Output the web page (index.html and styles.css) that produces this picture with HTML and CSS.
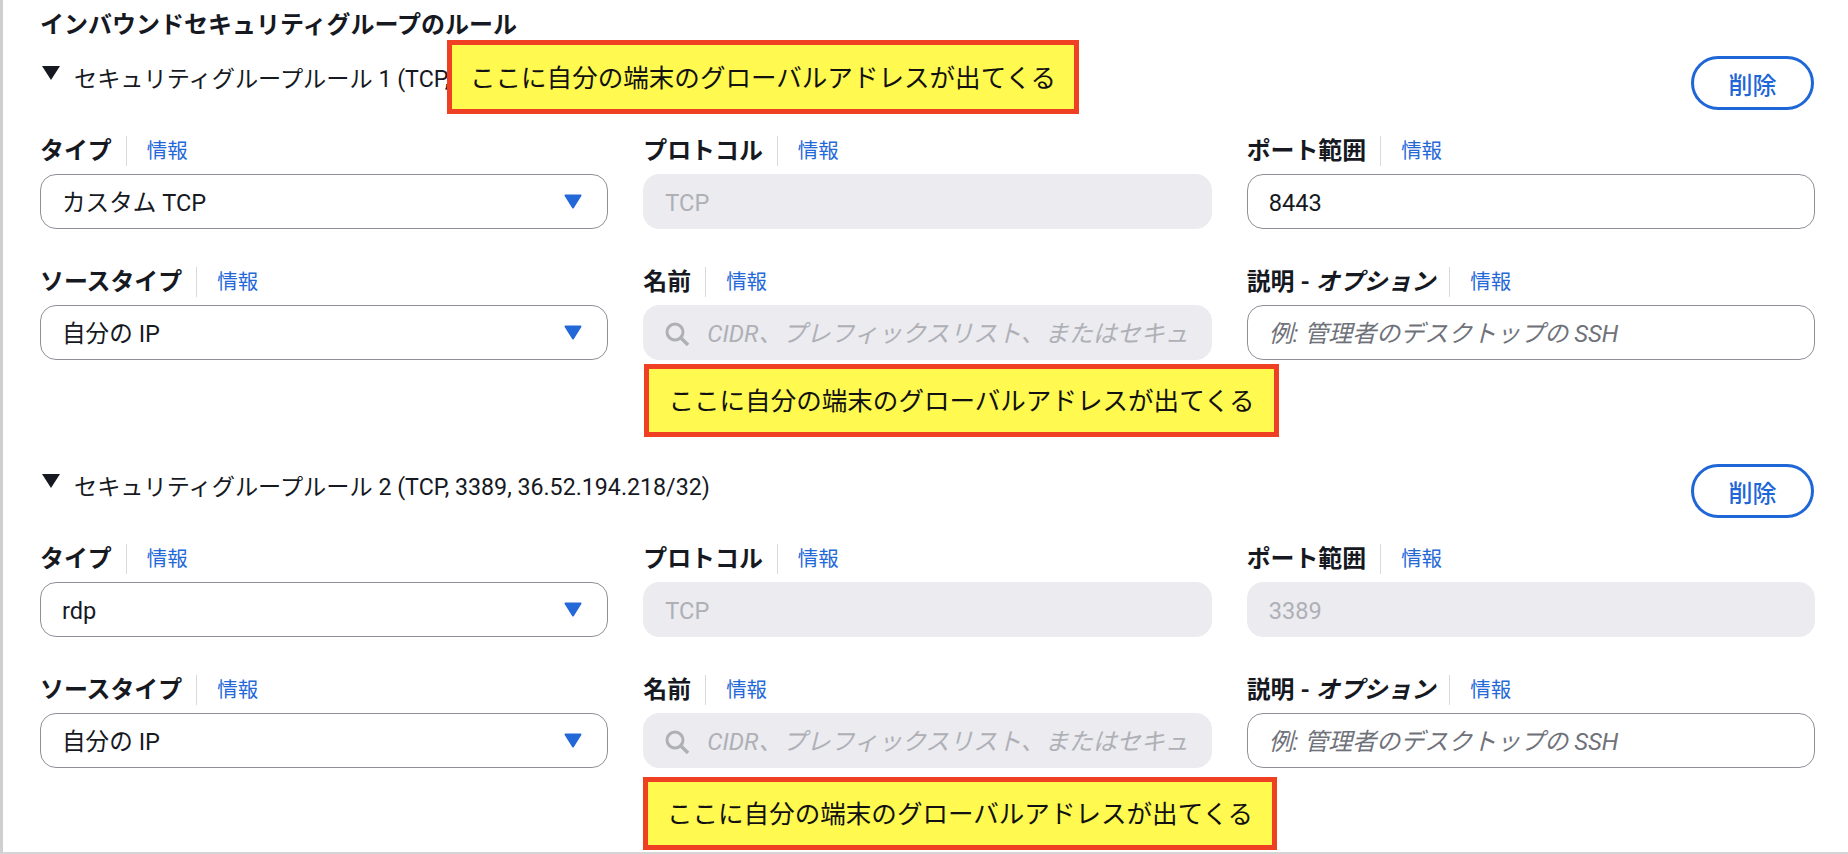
FILE: index.html
```html
<!DOCTYPE html>
<html lang="ja">
  <head>
    <title>インバウンドセキュリティグループのルール</title>
    <link rel="stylesheet" href="styles.css">
  </head>
  <body>
    <main class="panel">
      <h2 class="panel-title">インバウンドセキュリティグループのルール</h2>

      <section class="rule">
        <div class="rule-head">
          <div class="rule-title"><span class="caret"></span>セキュリティグループルール 1 (TCP,</div>
          <button class="btn-delete">削除</button>
        </div>
        <div class="fields">
          <div class="field">
            <div class="label"><span class="label-text">タイプ</span><a class="info">情報</a></div>
            <div class="control">カスタム TCP<svg class="arrow" viewBox="0 0 18 15"><path d="M1.5 1.5h15l-7.500 12z" fill="currentColor" stroke="currentColor" stroke-width="2" stroke-linejoin="round"/></svg></div>
          </div>
          <div class="field">
            <div class="label"><span class="label-text">プロトコル</span><a class="info">情報</a></div>
            <div class="control disabled">TCP</div>
          </div>
          <div class="field">
            <div class="label"><span class="label-text">ポート範囲</span><a class="info">情報</a></div>
            <div class="control">8443</div>
          </div>
          <div class="field">
            <div class="label"><span class="label-text">ソースタイプ</span><a class="info">情報</a></div>
            <div class="control">自分の IP<svg class="arrow" viewBox="0 0 18 15"><path d="M1.5 1.5h15l-7.500 12z" fill="currentColor" stroke="currentColor" stroke-width="2" stroke-linejoin="round"/></svg></div>
          </div>
          <div class="field">
            <div class="label"><span class="label-text">名前</span><a class="info">情報</a></div>
            <div class="control disabled">
              <svg class="search-icon" viewBox="0 0 24 24"><circle cx="10" cy="10" r="8" fill="none" stroke="currentColor" stroke-width="3"/><path d="M16 16l7 7" fill="none" stroke="currentColor" stroke-width="3.4"/></svg>
              <span class="hint">CIDR、プレフィックスリスト、またはセキュ</span>
            </div>
          </div>
          <div class="field">
            <div class="label"><span class="label-text">説明 - <em>オプション</em></span><a class="info">情報</a></div>
            <div class="control"><span class="hint dark">例: 管理者のデスクトップの SSH</span></div>
          </div>
        </div>
      </section>

      <section class="rule">
        <div class="rule-head">
          <div class="rule-title"><span class="caret"></span>セキュリティグループルール 2 (TCP, 3389, 36.52.194.218/32)</div>
          <button class="btn-delete">削除</button>
        </div>
        <div class="fields">
          <div class="field">
            <div class="label"><span class="label-text">タイプ</span><a class="info">情報</a></div>
            <div class="control">rdp<svg class="arrow" viewBox="0 0 18 15"><path d="M1.5 1.5h15l-7.500 12z" fill="currentColor" stroke="currentColor" stroke-width="2" stroke-linejoin="round"/></svg></div>
          </div>
          <div class="field">
            <div class="label"><span class="label-text">プロトコル</span><a class="info">情報</a></div>
            <div class="control disabled">TCP</div>
          </div>
          <div class="field">
            <div class="label"><span class="label-text">ポート範囲</span><a class="info">情報</a></div>
            <div class="control disabled">3389</div>
          </div>
          <div class="field">
            <div class="label"><span class="label-text">ソースタイプ</span><a class="info">情報</a></div>
            <div class="control">自分の IP<svg class="arrow" viewBox="0 0 18 15"><path d="M1.5 1.5h15l-7.500 12z" fill="currentColor" stroke="currentColor" stroke-width="2" stroke-linejoin="round"/></svg></div>
          </div>
          <div class="field">
            <div class="label"><span class="label-text">名前</span><a class="info">情報</a></div>
            <div class="control disabled">
              <svg class="search-icon" viewBox="0 0 24 24"><circle cx="10" cy="10" r="8" fill="none" stroke="currentColor" stroke-width="3"/><path d="M16 16l7 7" fill="none" stroke="currentColor" stroke-width="3.4"/></svg>
              <span class="hint">CIDR、プレフィックスリスト、またはセキュ</span>
            </div>
          </div>
          <div class="field">
            <div class="label"><span class="label-text">説明 - <em>オプション</em></span><a class="info">情報</a></div>
            <div class="control"><span class="hint dark">例: 管理者のデスクトップの SSH</span></div>
          </div>
        </div>
      </section>

      <div class="note note-top">ここに自分の端末のグローバルアドレスが出てくる</div>
      <div class="note note-mid">ここに自分の端末のグローバルアドレスが出てくる</div>
      <div class="note note-bottom">ここに自分の端末のグローバルアドレスが出てくる</div>
    </main>
  </body>
</html>
```

FILE: styles.css
```css
html, body { margin: 0; height: 100%; overflow: hidden; background: #fff; }
body { font-family: Roboto, "Noto Sans CJK JP", sans-serif; font-size: 23.6px; color: #16191f; }

.panel { position: relative; box-sizing: border-box; height: 100vh; padding: 8px 33px 0 37px; border-left: 3px solid #cfcfd2; border-bottom: 2px solid #d5d5d8; }
.panel-title { margin: 0 0 14px; font-size: 24px; line-height: 34px; font-weight: 700; }

.rule { padding-bottom: 104px; }
.rule-head { display: flex; justify-content: space-between; align-items: flex-start; height: 54px; margin-bottom: 26px; }
.rule-title { display: flex; align-items: center; margin-top: 6px; font-size: 23.2px; line-height: 34px; white-space: nowrap; }
.caret { width: 0; height: 0; margin: -12px 14px 0 2px; border-left: 9px solid transparent; border-right: 9px solid transparent; border-top: 14px solid #16191f; }
.btn-delete { box-sizing: border-box; width: 123px; height: 54px; margin-right: 1px; padding: 0; border: 3px solid #1f66d6; border-radius: 27px; background: #fff; color: #1f66d6; font: 500 24px Roboto, "Noto Sans CJK JP", sans-serif; }

.fields { display: grid; grid-template-columns: repeat(3, 1fr); column-gap: 35px; row-gap: 38px; }
.label { display: flex; align-items: center; height: 30px; margin-bottom: 8px; font-size: 23.9px; font-weight: 700; }
.label-text { padding-right: 14px; border-right: 1px solid #d9d9dc; line-height: 30px; }
.label-text em { font-style: italic; }
.info { margin-left: 20px; font-size: 20.5px; line-height: 30px; font-weight: 400; color: #2468d8; }

.control { display: flex; align-items: center; box-sizing: border-box; height: 55px; padding: 2px 21px 0; border: 1.5px solid #8f9097; border-radius: 16px; background: #fff; line-height: 32px; white-space: nowrap; overflow: hidden; }
.control.disabled { border-color: #ebebf0; background: #ebebf0; color: #aeb0b6; }
.arrow { flex: none; width: 18px; height: 15px; margin: -3px 4px 0 auto; color: #2468d8; }

.search-icon { flex: none; width: 24px; height: 24px; margin-right: 18px; color: #aeb0b6; }
.hint { font-size: 24px; font-style: italic; color: #aeb0b6; }
.hint.dark { color: #70727a; }

.note { position: absolute; display: flex; align-items: center; justify-content: center; box-sizing: border-box; height: 73px; padding-bottom: 4px; border: 5px solid #ef4023; background: #fff950; color: #111; font-size: 25.55px; white-space: nowrap; }
.note-top { top: 40px; left: 444px; width: 632px; height: 74px; }
.note-mid { top: 364px; left: 641px; width: 635px; }
.note-bottom { top: 777px; left: 640px; width: 634px; }
```
